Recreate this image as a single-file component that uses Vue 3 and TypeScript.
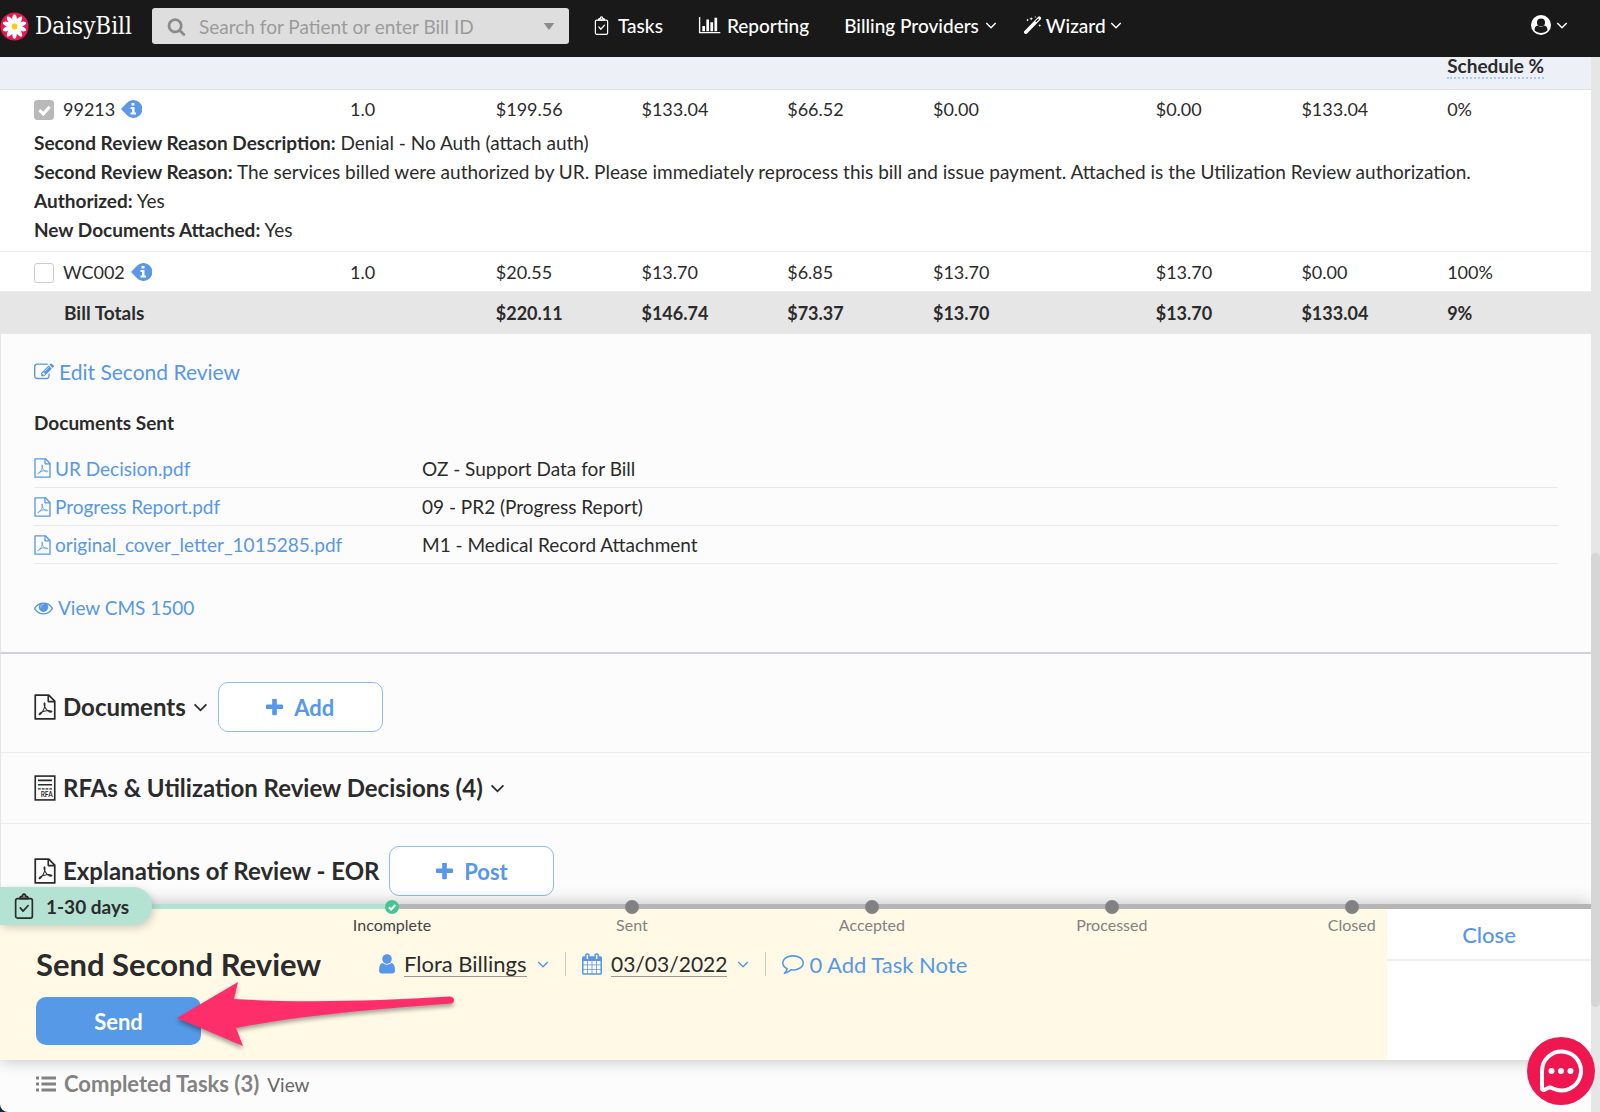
<script setup lang="ts">
import { ref } from 'vue'

interface BillLine {
  code: string
  checked: boolean
  values: string[]
  review: { label: string; text: string }[]
}

interface SentDocument {
  name: string
  type: string
}

const lines = ref<BillLine[]>([
  {
    code: '99213',
    checked: true,
    values: ['1.0', '$199.56', '$133.04', '$66.52', '$0.00', '$0.00', '$133.04', '0%'],
    review: [
      { label: 'Second Review Reason Description:', text: 'Denial - No Auth (attach auth)' },
      {
        label: 'Second Review Reason:',
        text: 'The services billed were authorized by UR. Please immediately reprocess this bill and issue payment. Attached is the Utilization Review authorization.',
      },
      { label: 'Authorized:', text: 'Yes' },
      { label: 'New Documents Attached:', text: 'Yes' },
    ],
  },
  {
    code: 'WC002',
    checked: false,
    values: ['1.0', '$20.55', '$13.70', '$6.85', '$13.70', '$13.70', '$0.00', '100%'],
    review: [],
  },
])

const totals: string[] = ['$220.11', '$146.74', '$73.37', '$13.70', '$13.70', '$133.04', '9%']

const documents: SentDocument[] = [
  { name: 'UR Decision.pdf', type: 'OZ - Support Data for Bill' },
  { name: 'Progress Report.pdf', type: '09 - PR2 (Progress Report)' },
  { name: 'original_cover_letter_1015285.pdf', type: 'M1 - Medical Record Attachment' },
]

const steps: string[] = ['Incomplete', 'Sent', 'Accepted', 'Processed', 'Closed']
const currentStep = 0

const search = ref('')
const assignee = ref('Flora Billings')
const petals: number[] = [0, 36, 72, 108, 144, 180, 216, 252, 288, 324]
</script>

<template>
  <svg class="sprite" aria-hidden="true">
    <symbol id="chevron" viewBox="0 0 14 10">
      <path d="M1.5 2l5.5 5.6L12.500 2" fill="none" stroke="currentColor" stroke-width="1.700" />
    </symbol>
    <symbol id="pdf" viewBox="0 0 20 24">
      <g fill="none" stroke="currentColor" stroke-linejoin="round">
        <path d="M1 1h12.500L19 6.500V23H1z" stroke-width="1.600" />
        <path d="M13 1v6h6" stroke-width="1.500" />
        <path
          d="M9.500 8.200c-1 .9.400 3.900 1.500 5.700 1.200 2 3.500 3 5 2.700 1.200-.5-.8-1.700-4.500-1.200-3 .3-6.500 1.900-6.900 3.300.5 1.500 3.200-2.200 4.400-5 1-2.400 1.500-5.300.5-5.500z"
          stroke-width="1"
        />
      </g>
    </symbol>
    <symbol id="clipboard" viewBox="0 0 20 28">
      <g fill="none" stroke="currentColor" stroke-width="1.800" stroke-linejoin="round" stroke-linecap="round">
        <rect x="1" y="6" width="18" height="21" rx="2" />
        <path d="M5.500 6c0-2 1.500-2.500 2.700-2.500C8.300.5 11.700.5 11.800 3.500c1.200 0 2.700.5 2.700 2.500z" fill="currentColor" fill-opacity=".4" />
        <path d="M6 16l3 3.500 5.500-6" />
      </g>
    </symbol>
    <symbol id="plus" viewBox="192 192 1408 1408">
      <path
        fill="currentColor"
        d="M1600 736v192q0 40-28 68t-68 28h-416v416q0 40-28 68t-68 28h-192q-40 0-68-28t-28-68v-416h-416q-40 0-68-28t-28-68v-192q0-40 28-68t68-28h416v-416q0-40 28-68t68-28h192q40 0 68 28t28 68v416h416q40 0 68 28t28 68z"
      />
    </symbol>
  </svg>

  <div class="app">
    <header class="topbar">
      <a class="brand" href="#">
        <svg class="daisy" viewBox="0 0 32 32" aria-hidden="true">
          <circle cx="16" cy="16" r="15.500" fill="#e8174f" />
          <ellipse v-for="angle in petals" :key="angle" cx="16" cy="8.500" rx="2.600" ry="6" fill="#fff" :transform="`rotate(${angle} 16 16)`" />
          <circle cx="16" cy="16" r="3.200" fill="#fccb1b" />
        </svg>
        <span class="wordmark">DaisyBill</span>
      </a>
      <label class="search">
        <svg class="search-icon" viewBox="0 0 1792 1792" aria-hidden="true">
          <path
            fill="currentColor"
            d="M1216 832q0-185-131.500-316.500t-316.500-131.500-316.500 131.500-131.500 316.500 131.500 316.500 316.500 131.500 316.500-131.500 131.500-316.500zm512 832q0 52-38 90t-90 38q-54 0-90-38l-343-342q-179 124-399 124-143 0-273.500-55.500t-225-150-150-225-55.500-273.500 55.500-273.500 150-225 225-150 273.500-55.500 273.500 55.500 225 150 150 225 55.500 273.500q0 220-124 399l343 343q37 37 37 90z"
          />
        </svg>
        <input v-model="search" type="text" placeholder="Search for Patient or enter Bill ID" aria-label="Search" />
        <svg class="caret" viewBox="0 0 12 8" aria-hidden="true"><path d="M0 0h12L6 8z" fill="currentColor" /></svg>
      </label>
      <nav class="menu" aria-label="Main">
        <a class="tasks" href="#"><svg class="ic-clip" aria-hidden="true"><use href="#clipboard" /></svg>Tasks</a>
        <a class="reporting" href="#">
          <svg class="ic-chart" viewBox="0 0 24 20" aria-hidden="true">
            <path d="M1 1v17.500h23" fill="none" stroke="currentColor" stroke-width="1.500" />
            <path d="M4 11h3v6H4zM8.500 4h3v13h-3zM13 7h3v10h-3zM17.500 2h3v15h-3z" fill="currentColor" />
          </svg>Reporting</a>
        <a class="providers" href="#">Billing Providers<svg class="ic-down" aria-hidden="true"><use href="#chevron" /></svg></a>
        <a class="wizard" href="#">
          <svg class="ic-wand" viewBox="0 0 20 20" aria-hidden="true">
            <path d="M2 18L17 2.500" stroke="currentColor" stroke-width="4" stroke-linecap="round" />
            <path d="M13 6.500L16.300 3.200" stroke="#191919" stroke-width="1.500" />
            <path d="M8 1l.6 1.400L10 3l-1.400.6L8 5l-.6-1.400L6 3l1.400-.6zM4 3l.5 1 1 .5-1 .5-.5 1-.5-1-1-.5 1-.5zM17.500 9l.5 1 1 .5-1 .5-.5 1-.5-1-1-.5 1-.5zM12.500 0l.3.7.7.300-.7.300-.3.700-.3-.7-.7-.3.700-.3z" fill="currentColor" />
          </svg>Wizard<svg class="ic-down" aria-hidden="true"><use href="#chevron" /></svg></a>
      </nav>
      <button class="account" type="button" aria-label="Account">
        <svg class="ic-account" viewBox="0 0 20 20" aria-hidden="true">
          <circle cx="10" cy="10" r="10" fill="currentColor" />
          <circle cx="10" cy="7.500" r="4" fill="#191919" />
          <path d="M3.500 15.200c0-3 1.500-4.200 3.300-4.600 1.800 1.700 4.600 1.700 6.400 0 1.800.4 3.300 1.600 3.300 4.600-3.500 3.700-9.500 3.700-13 0z" fill="#191919" />
        </svg>
        <svg class="ic-down" aria-hidden="true"><use href="#chevron" /></svg>
      </button>
    </header>

    <div class="viewport">
      <main class="page">
        <table class="bill">
          <colgroup>
            <col class="c-code" /><col class="c-std" /><col class="c-std" /><col class="c-std" /><col class="c-std" />
            <col class="c-wide" /><col class="c-std" /><col class="c-std" /><col />
          </colgroup>
          <thead>
            <tr>
              <td colspan="8"></td>
              <th scope="col"><span>Schedule %</span></th>
            </tr>
          </thead>
          <tbody v-for="line in lines" :key="line.code" :class="{ open: line.review.length }">
            <tr>
              <td>
                <label class="code">
                  <input v-model="line.checked" type="checkbox" :disabled="line.checked" />
                  {{ line.code }}
                  <svg class="info" viewBox="0 0 21 18" aria-hidden="true">
                    <path d="M0 9L5.500 3.200A9 9 0 1 1 5.500 14.800z" fill="#5c97ea" />
                    <path d="M10.500 3h3v2.500h-3zM9.500 7h4v5.500H15V14.500H9.500v-2H11V9H9.500z" fill="#fff" />
                  </svg>
                </label>
              </td>
              <td v-for="(value, i) in line.values" :key="i">{{ value }}</td>
            </tr>
            <tr v-if="line.review.length" class="review">
              <td colspan="9">
                <p v-for="item in line.review" :key="item.label"><b>{{ item.label }}</b> {{ item.text }}</p>
              </td>
            </tr>
          </tbody>
          <tfoot>
            <tr>
              <th scope="row" colspan="2">Bill Totals</th>
              <td v-for="(total, i) in totals" :key="i">{{ total }}</td>
            </tr>
          </tfoot>
        </table>

        <section class="sent">
          <a class="action edit" href="#">
            <svg class="ic-edit" viewBox="0 0 1792 1792" aria-hidden="true">
              <path
                fill="currentColor"
                d="M888 1184l116-116-152-152-116 116v56h96v96h56zm440-720q-16-16-33 1l-350 350q-17 17-1 33t33-1l350-350q17-17 1-33zm80 594v190q0 119-84.500 203.500t-203.500 84.500h-832q-119 0-203.500-84.500t-84.500-203.500v-832q0-119 84.500-203.500t203.500-84.500h832q63 0 117 25 15 7 18 23 3 17-9 29l-49 49q-14 14-32 8-23-6-45-6h-832q-66 0-113 47t-47 113v832q0 66 47 113t113 47h832q66 0 113-47t47-113v-126q0-13 9-22l64-64q15-15 35-7t20 29zm-96-738l288 288-672 672h-288v-288zm444 132l-92 92-288-288 92-92q28-28 68-28t68 28l152 152q28 28 28 68t-28 68z"
              />
            </svg>Edit Second Review</a>
          <h3>Documents Sent</h3>
          <table class="files">
            <tbody>
              <tr v-for="doc in documents" :key="doc.name">
                <td class="file">
                  <a href="#"><svg class="ic-pdf" aria-hidden="true"><use href="#pdf" /></svg>{{ doc.name }}</a>
                </td>
                <td>{{ doc.type }}</td>
              </tr>
            </tbody>
          </table>
          <a class="action" href="#">
            <svg class="ic-eye" viewBox="0 384 1792 1152" aria-hidden="true">
              <path
                fill="currentColor"
                d="M1664 960q-152-236-381-353 61 104 61 225 0 185-131.500 316.500t-316.500 131.500-316.500-131.500-131.500-316.500q0-121 61-225-229 117-381 353 133 205 333.500 326.500t434.500 121.500 434.500-121.500 333.500-326.500zm-720-384q0-20-14-34t-34-14q-125 0-214.500 89.500t-89.500 214.500q0 20 14 34t34 14 34-14 14-34q0-86 61-147t147-61q20 0 34-14t14-34zm848 384q0 34-20 69-140 230-376.500 368.500t-499.500 138.500-499.500-139-376.500-368q-20-35-20-69t20-69q140-229 376.500-368t499.500-139 499.500 139 376.500 368q20 35 20 69z"
              />
              <circle cx="896" cy="832" r="330" fill="currentColor" fill-opacity=".6" />
            </svg>View CMS 1500</a>
        </section>

        <section class="group documents">
          <h2><svg class="ic-doc" aria-hidden="true"><use href="#pdf" /></svg>Documents<svg class="ic-open" aria-hidden="true"><use href="#chevron" /></svg></h2>
          <button class="outline" type="button"><svg class="ic-plus" aria-hidden="true"><use href="#plus" /></svg>Add</button>
        </section>
        <section class="group rfas">
          <h2>
            <svg class="ic-doc" viewBox="0 0 20 24" aria-hidden="true">
              <rect x="1" y="1" width="18" height="22" fill="none" stroke="currentColor" stroke-width="1.500" />
              <path d="M3.500 5h13M3.500 9h13" stroke="currentColor" stroke-width="1.500" />
              <path d="M3.500 12.800h13" stroke="currentColor" stroke-width="1.300" stroke-dasharray="2.600 .9" />
              <text x="6" y="20.500" font-size="6" font-weight="700" fill="currentColor">RFA</text>
            </svg>RFAs &amp; Utilization Review Decisions (4)<svg class="ic-open" aria-hidden="true"><use href="#chevron" /></svg>
          </h2>
        </section>
        <section class="group eor">
          <h2><svg class="ic-doc" aria-hidden="true"><use href="#pdf" /></svg>Explanations of Review - EOR</h2>
          <button class="outline" type="button"><svg class="ic-plus" aria-hidden="true"><use href="#plus" /></svg>Post</button>
        </section>

        <section class="task">
          <div class="track"></div>
          <div class="due"><svg class="ic-due" aria-hidden="true"><use href="#clipboard" /></svg>1-30 days</div>
          <ol class="steps">
            <li v-for="(step, i) in steps" :key="step" :class="{ current: i === currentStep }">
              <svg class="dot" viewBox="0 0 14 14" aria-hidden="true">
                <circle cx="7" cy="7" r="7" fill="currentColor" />
                <path v-if="i === currentStep" d="M3.800 7.200l2.300 2.300 4.200-4.500" fill="none" stroke="#fff" stroke-width="2" />
              </svg>
              <span>{{ step }}</span>
            </li>
          </ol>
          <div class="task-body">
            <div class="task-main">
              <div class="task-head">
                <h1>Send Second Review</h1>
                <label class="field assignee">
                  <svg class="ic-user" viewBox="0 0 16 20" aria-hidden="true">
                    <circle cx="8" cy="5" r="4.800" fill="currentColor" />
                    <path d="M3.500 9q4.500 3.400 9 0Q16 9.500 16 16.500q0 3-3 3H3q-3 0-3-3Q0 9.500 3.500 9z" fill="currentColor" />
                  </svg>
                  <select v-model="assignee" aria-label="Assignee"><option>Flora Billings</option></select>
                  <svg class="ic-down" aria-hidden="true"><use href="#chevron" /></svg>
                </label>
                <div class="field date">
                  <svg class="ic-cal" viewBox="64 0 1664 1792" aria-hidden="true">
                    <path
                      fill="currentColor"
                      d="M192 1664h288v-288h-288v288zm352 0h320v-288h-320v288zm-352-352h288v-320h-288v320zm352 0h320v-320h-320v320zm-352-384h288v-288h-288v288zm736 736h320v-288h-320v288zm-384-736h320v-288h-320v288zm768 736h288v-288h-288v288zm-384-352h320v-320h-320v320zm-352-864v-288q0-13-9.500-22.500t-22.500-9.500h-64q-13 0-22.500 9.500t-9.500 22.500v288q0 13 9.500 22.500t22.500 9.500h64q13 0 22.500-9.500t9.500-22.500zm736 864h288v-320h-288v320zm-384-384h320v-288h-320v288zm384 0h288v-288h-288v288zm32-480v-288q0-13-9.500-22.500t-22.500-9.500h-64q-13 0-22.500 9.500t-9.500 22.500v288q0 13 9.500 22.500t22.500 9.500h64q13 0 22.500-9.500t9.500-22.500zm384-64v1280q0 52-38 90t-90 38h-1408q-52 0-90-38t-38-90v-1280q0-52 38-90t90-38h128v-96q0-66 47-113t113-47h64q66 0 113 47t47 113v96h384v-96q0-66 47-113t113-47h64q66 0 113 47t47 113v96h128q52 0 90 38t38 90z"
                    />
                  </svg>
                  <button class="due-date" type="button">03/03/2022</button>
                  <svg class="ic-down" aria-hidden="true"><use href="#chevron" /></svg>
                </div>
                <a class="field note" href="#">
                  <svg class="ic-comment" viewBox="0 256 1792 1536" aria-hidden="true">
                    <path
                      fill="currentColor"
                      d="M896 384q-204 0-381.500 69.500t-282 187.500-104.500 255q0 112 71.500 213.500t201.500 175.500l87 50-27 96q-24 91-70 172 152-63 275-171l43-38 57 6q69 8 130 8 204 0 381.500-69.500t282-187.500 104.500-255-104.500-255-282-187.500-381.500-69.500zm896 512q0 174-120 321.500t-326 233-450 85.500q-70 0-145-8-198 175-460 242-49 14-114 22h-5q-15 0-27-10.500t-16-27.500v-1q-3-4-.5-12t2-10 4.500-9.500l6-9 7-8.500 8-9q7-8 31-34.500t34.500-38 31-39.500 32.500-51 27-59 26-76q-157-89-247.500-220t-90.500-281q0-174 120-321.500t326-233 450-85.500 450 85.500 326 233 120 321.500z"
                    />
                  </svg>0 Add Task Note</a>
              </div>
              <button class="send" type="button">Send</button>
            </div>
            <aside class="task-side">
              <button type="button">Close</button>
            </aside>
          </div>
          <svg class="pointer" viewBox="0 0 290 76" aria-hidden="true">
            <path
              d="M5 41L66 5L62 22C135 26 200 24 278 19.500Q282 20 282 23Q282 26 279 26.500C205 32 130 38 64 51L71 69z"
              fill="#fd2e6a"
            />
          </svg>
        </section>

        <footer class="completed">
          <svg class="ic-list" viewBox="0 0 20 16" aria-hidden="true">
            <path d="M0 .5h3v3H0zM0 6.500h3v3H0zM0 12.500h3v3H0zM5.500 .5H20v3H5.500zM5.500 6.500H20v3H5.500zM5.500 12.500H20v3H5.500z" fill="currentColor" />
          </svg>
          <h2>Completed Tasks (3)</h2>
          <a href="#">View</a>
        </footer>
      </main>
      <div class="scrollbar"><div class="thumb"></div></div>
    </div>

    <button class="chat" type="button" aria-label="Chat">
      <svg viewBox="0 0 68 68" aria-hidden="true">
        <path d="M15 52V34a19.500 19.500 0 1 1 11 17.500q-3-1.600-5-.5l-4 2q-2 0-2-2z" fill="none" stroke="#fff" stroke-width="4" stroke-linejoin="round" />
        <g fill="#fff"><circle cx="24.500" cy="34" r="3" /><circle cx="34" cy="34" r="3" /><circle cx="43.500" cy="34" r="3" /></g>
      </svg>
    </button>
  </div>
</template>

<style>
body {
  margin: 0;
  background: #0d2a47;
}
</style>

<style scoped>
.app,
.app button,
.app input,
.app select {
  font-family: Lato, 'Open Sans', sans-serif;
}
.app {
  display: flex;
  flex-direction: column;
  min-height: 100vh;
  font-size: 19px;
  color: #2b2b2b;
}
.app * {
  box-sizing: border-box;
}
.sprite {
  display: none;
}
svg {
  flex: none;
}
a {
  color: #5797ea;
  text-decoration: none;
}
h1, h2, h3, p, ol {
  margin: 0;
  padding: 0;
}
button {
  padding: 0;
  border: 0;
  background: none;
  color: inherit;
}
.ic-down {
  width: 12px;
  height: 9px;
}

.topbar {
  display: flex;
  align-items: center;
  height: 57px;
  padding-right: 32px;
  padding-bottom: 5px;
  background: #191919;
  color: #fff;
}
.brand {
  display: flex;
  align-items: center;
  gap: 6px;
  width: 152px;
  color: #fff;
}
.daisy {
  width: 29px;
  height: 31px;
}
.wordmark {
  font: 24px 'DejaVu Serif Condensed', 'DejaVu Serif', serif;
}
.search {
  display: flex;
  align-items: center;
  width: 417px;
  height: 36px;
  padding: 0 14px 0 15px;
  border-radius: 3px;
  background: #dedede;
  color: #8b8b8b;
}
.search-icon {
  width: 19px;
  height: 19px;
}
.search input {
  flex: 1;
  min-width: 0;
  padding: 0 0 0 13px;
  border: 0;
  outline: 0;
  background: none;
  font-size: 19px;
  color: #333;
}
.search input::placeholder {
  color: #9b9b9b;
}
.caret {
  width: 12px;
  height: 7px;
}
.menu {
  display: flex;
  flex: 1;
  gap: 27px;
  margin-left: 25px;
  padding-bottom: 2px;
  font-weight: 500;
}
.menu a {
  display: flex;
  align-items: center;
  gap: 6px;
  color: #fff;
}
.menu .tasks {
  gap: 9px;
}
.menu .reporting,
.menu .providers {
  margin-left: 8px;
}
.menu .wizard {
  gap: 4px;
}
.ic-clip {
  width: 15px;
  height: 19px;
}
.ic-chart {
  width: 23px;
  height: 18px;
}
.ic-wand {
  width: 18px;
  height: 18px;
}
.account {
  display: flex;
  align-items: center;
  gap: 5px;
  padding-bottom: 2px;
}
.ic-account {
  width: 20px;
  height: 20px;
}

.viewport {
  display: flex;
  flex: 1;
}
.page {
  flex: 1;
  min-width: 0;
  background: #fcfcfc;
  border-bottom-left-radius: 8px;
}
.scrollbar {
  position: relative;
  width: 9px;
  background: #e6e6e6;
}
.thumb {
  position: absolute;
  top: 47%;
  bottom: 10%;
  width: 100%;
  border-radius: 5px;
  background: #d6d6d6;
}

.bill {
  width: 100%;
  table-layout: fixed;
  border-collapse: collapse;
  background: #fff;
}
.bill td,
.bill th {
  height: 40px;
  padding: 0;
  font-size: 18px;
  text-align: left;
}
.c-code {
  width: 22%;
}
.c-std {
  width: 9.16%;
}
.c-wide {
  width: 14%;
}
.bill thead {
  background: #edf1f7;
  border-bottom: 1px solid #e2e3e6;
}
.bill thead td,
.bill thead th {
  height: 32px;
  font-size: 19px;
  vertical-align: top;
}
.bill thead span {
  display: block;
  width: fit-content;
  height: 22px;
  line-height: 18px;
  border-bottom: 2px dotted #a9c9f5;
}
.bill tbody {
  border-bottom: 1px solid #ececec;
}
.bill .open td {
  height: 39px;
}
.code {
  display: flex;
  align-items: center;
  gap: 6px;
  padding-left: 34px;
}
.code input {
  appearance: none;
  position: relative;
  width: 20px;
  height: 20px;
  margin: 2px 3px 0 0;
  border: 1px solid #ccc;
  border-radius: 3px;
  background: #fff;
}
.code input:checked {
  border-color: #b9b9b9;
  background: #b9b9b9;
}
.code input:checked::after {
  content: '';
  position: absolute;
  left: 6px;
  top: 3px;
  width: 4px;
  height: 8px;
  border: solid #fff;
  border-width: 0 3px 3px 0;
  transform: rotate(42deg);
}
.info {
  width: 21px;
  height: 18px;
}
.bill .review td {
  padding: 0 34px 7px;
  font-size: 19px;
  line-height: 29px;
}
.bill tfoot {
  background: #e6e6e6;
  font-weight: 700;
}
.bill tfoot td,
.bill tfoot th {
  height: 42px;
}
.bill tfoot th {
  padding-left: 64px;
  font-size: 19px;
}

.sent {
  padding: 23px 33px 29px;
  border-left: 1px solid #e4e4e4;
  border-bottom: 2px solid #d0d1da;
}
.action {
  display: flex;
  align-items: center;
  gap: 5px;
  line-height: 30px;
}
.action.edit {
  font-size: 21px;
}
.ic-edit {
  width: 20px;
  height: 20px;
}
.ic-eye {
  width: 19px;
  height: 13px;
}
.sent h3 {
  margin: 21px 0 12px;
  font-size: 19px;
  line-height: 30px;
}
.files {
  width: 100%;
  margin-bottom: 29px;
  table-layout: fixed;
  border-collapse: collapse;
}
.files td {
  height: 38px;
  padding: 0;
  border-bottom: 1px solid #e9e9e9;
}
.files .file {
  width: 388px;
}
.files a {
  display: flex;
  align-items: center;
  gap: 4px;
}
.ic-pdf {
  width: 17px;
  height: 20px;
}

.group {
  display: flex;
  align-items: center;
  gap: 10px;
  padding: 20px 33px;
  border-left: 1px solid #e4e4e4;
  border-bottom: 1px solid #ececec;
}
.group h2 {
  display: flex;
  align-items: center;
  gap: 7px;
  font-size: 24px;
  line-height: 30px;
  white-space: nowrap;
}
.documents {
  padding-top: 28px;
}
.eor {
  padding-top: 22px;
  padding-bottom: 8px;
  border-bottom: 0;
}
.ic-doc {
  width: 22px;
  height: 26px;
}
.ic-open {
  width: 15px;
  height: 11px;
}
.outline {
  display: flex;
  align-items: center;
  justify-content: center;
  gap: 11px;
  width: 165px;
  height: 50px;
  border: 1px solid #8fbaf3;
  border-radius: 10px;
  background: #fff;
  font-size: 22px;
  font-weight: 700;
  color: #5797ea;
}
.ic-plus {
  width: 17px;
  height: 17px;
}

.task {
  position: relative;
  background: #fff9e6;
  box-shadow: 0 0 16px rgba(0, 0, 0, 0.25);
}
.track {
  height: 5px;
  background: linear-gradient(to right, #b0e2d0 24.6%, #b5b5b5 24.6%);
}
.due {
  position: absolute;
  top: -17px;
  left: 0;
  display: flex;
  align-items: center;
  gap: 12px;
  width: 152px;
  height: 38px;
  padding-left: 14px;
  border-radius: 0 19px 19px 0;
  background: #b4e2d3;
  box-shadow: 2px 3px 8px rgba(0, 0, 0, 0.18);
  font-weight: 700;
}
.ic-due {
  width: 20px;
  height: 26px;
}
.steps {
  position: absolute;
  top: -4px;
  left: 17.1%;
  right: 7.5%;
  display: grid;
  grid-template-columns: repeat(5, 1fr);
  list-style: none;
  font-size: 16px;
  line-height: 20px;
  color: #828282;
  pointer-events: none;
}
.steps li {
  display: flex;
  flex-direction: column;
  align-items: center;
  gap: 1px;
}
.dot {
  width: 14px;
  height: 14px;
}
.current .dot {
  color: #45c596;
}
.current span {
  color: #444;
}
.task-body {
  display: flex;
}
.task-main {
  flex: 1;
  padding: 39px 36px 15px;
}
.task-head {
  display: flex;
  align-items: center;
  height: 32px;
  margin-bottom: 17px;
}
.task-head h1 {
  flex-basis: 343px;
  font-size: 31px;
  line-height: 32px;
  white-space: nowrap;
}
.field {
  display: flex;
  align-items: center;
  height: 24px;
  font-size: 22px;
  color: #5797ea;
}
.field + .field {
  margin-left: 16px;
  padding-left: 16px;
  border-left: 1px solid #ccc9bd;
}
.field select,
.due-date {
  appearance: none;
  margin: 0 10px 0 9px;
  padding: 0;
  border: 0;
  border-bottom: 1px solid #999;
  background: none;
  font-size: 22px;
  line-height: 24px;
  color: #2b2b2b;
}
.due-date {
  font-size: 21px;
}
.field.note {
  gap: 5px;
}
.ic-user {
  width: 16px;
  height: 20px;
}
.ic-cal {
  width: 20px;
  height: 22px;
}
.ic-comment {
  width: 22px;
  height: 19px;
}
.send {
  width: 165px;
  height: 48px;
  border-radius: 10px;
  background: #5599e7;
  font-size: 22px;
  font-weight: 700;
  color: #fff;
}
.task-side {
  width: 204px;
  background: #fff;
}
.task-side button {
  display: block;
  width: 100%;
  height: 52px;
  border-bottom: 2px solid #efefef;
  font-size: 22px;
  font-weight: 500;
  color: #5797ea;
}
.pointer {
  position: absolute;
  left: 172px;
  top: 73px;
  width: 290px;
  height: 76px;
  filter: drop-shadow(0 3px 2px rgba(0, 0, 0, 0.35));
}

.completed {
  display: flex;
  align-items: center;
  gap: 8px;
  padding: 9px 36px 11px;
  color: #828282;
}
.completed h2 {
  font-size: 22px;
  line-height: 30px;
}
.completed a {
  color: #666;
}
.ic-list {
  width: 20px;
  height: 16px;
}

.chat {
  position: fixed;
  right: 5px;
  bottom: 7px;
  width: 68px;
  height: 68px;
  border-radius: 50%;
  background: #ee174f;
}
.chat svg {
  display: block;
  width: 68px;
  height: 68px;
}
</style>
